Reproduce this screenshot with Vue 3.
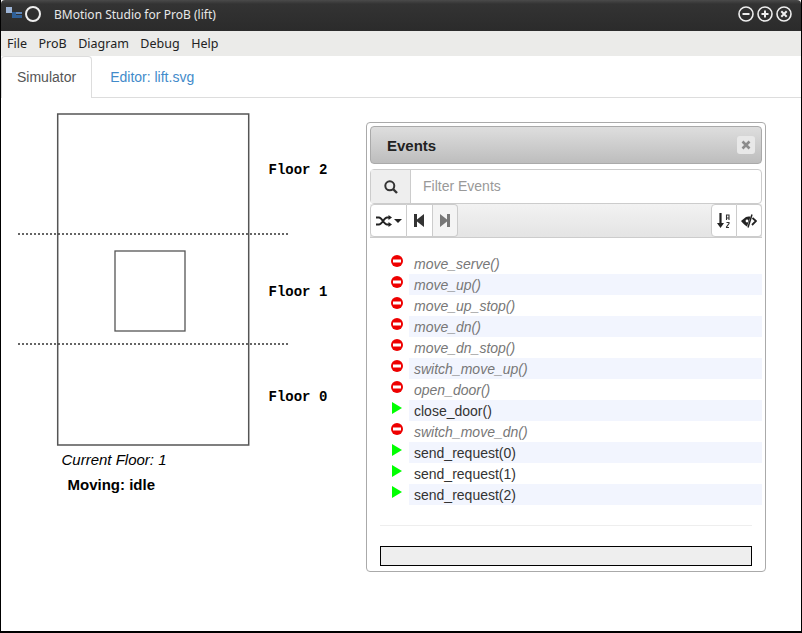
<template>
  <div class="win">
    <header class="titlebar">
      <svg class="app-icon" viewBox="0 0 16 12" width="16" height="12">
        <rect x="0" y="0" width="6" height="6" fill="#9db4d6" />
        <rect x="6" y="5" width="4" height="6" fill="#2f5f96" />
        <rect x="10" y="5" width="6" height="2" fill="#5f86b8" />
        <rect x="10" y="8" width="6" height="3" fill="#2f5f96" />
      </svg>
      <span class="ring"></span>
      <span class="title">BMotion Studio for ProB (lift)</span>
      <div class="win-btns">
        <svg v-for="b in winButtons" :key="b" viewBox="0 0 16 16" width="16" height="16">
          <circle cx="8" cy="8" r="7" fill="none" stroke="#eee" stroke-width="1.6" />
          <path :d="b" stroke="#eee" stroke-width="2" fill="none" />
        </svg>
      </div>
    </header>
    <nav class="menubar">
      <span v-for="m in menus" :key="m">{{ m }}</span>
    </nav>
    <div class="tabs">
      <div class="tab active">Simulator</div>
      <div class="tab">Editor: lift.svg</div>
    </div>
    <main class="content">
      <svg class="lift" width="339" height="400" viewBox="1 1 339 400">
        <rect x="57.700" y="17" width="191" height="331" fill="#fff" stroke="#555" stroke-width="1.500" />
        <rect x="115" y="154" width="70" height="80" fill="#fff" stroke="#555" stroke-width="1.300" />
        <line x1="18" y1="137" x2="288" y2="137" class="dash" />
        <line x1="18" y1="247" x2="288" y2="247" class="dash" />
        <text x="268.500" y="77" class="floor">Floor 2</text>
        <text x="268.500" y="199" class="floor">Floor 1</text>
        <text x="268.500" y="304" class="floor">Floor 0</text>
        <text x="61.500" y="368" class="cur">Current Floor: 1</text>
        <text x="67.500" y="393" class="moving">Moving: idle</text>
      </svg>
      <section class="panel">
        <div class="panel-head">
          <span>Events</span>
          <button class="close">
            <svg viewBox="0 0 10 10" width="10" height="10"><path d="M1.5 1.5l7 7M8.5 1.5l-7 7" stroke="#8c8c8c" stroke-width="2.6" /></svg>
          </button>
        </div>
        <div class="filter">
          <div class="addon">
            <svg viewBox="0 0 14 14" width="14" height="14"><circle cx="5.8" cy="5.8" r="4.5" fill="none" stroke="#333" stroke-width="2" /><path d="M9 9l4 4" stroke="#333" stroke-width="2.400" /></svg>
          </div>
          <div class="filter-input">Filter Events</div>
        </div>
        <div class="toolbar">
          <div class="group">
            <button class="tb wide">
              <svg viewBox="0 0 16 12" width="16" height="12"><path d="M0 2.5h3c3 0 5 7 8 7h2M0 9.500h3c3 0 5-7 8-7h2" fill="none" stroke="#222" stroke-width="2" /><path d="M12.500 0l3.500 2.500-3.500 2.500zM12.500 7l3.500 2.500-3.500 2.500z" fill="#222" /></svg>
              <i class="caret"></i>
            </button>
            <button class="tb">
              <svg viewBox="0 0 10 13" width="10" height="13"><path d="M0 0h3v5.500L10 0v13L3 7.500V13H0z" fill="#333" /></svg>
            </button>
            <button class="tb off">
              <svg viewBox="0 0 10 13" width="10" height="13"><path d="M10 0H7v5.500L0 0v13l7-5.500V13h3z" fill="#777" /></svg>
            </button>
          </div>
          <div class="group">
            <button class="tb">
              <svg viewBox="0 0 13 16" width="13" height="16">
                <path d="M3.500 0v11" stroke="#222" stroke-width="2.200" /><path d="M0 10h7l-3.500 5z" fill="#222" />
                <path d="M9.500 7V2h2.500v5M9.500 5h2.500" fill="none" stroke="#333" stroke-width="1.100" />
                <path d="M9.500 9.500h2.500v1l-2.500 3.500v.5h2.500" fill="none" stroke="#333" stroke-width="1.100" />
              </svg>
            </button>
            <button class="tb">
              <svg viewBox="0 0 16 14" width="16" height="14">
                <path d="M0 7l5-4c1.500-.6 3-.8 4.500-.2L6 12.500C4 11.500 2 9.500 0 7z" fill="#222" />
                <circle cx="6" cy="7" r="1.400" fill="#fff" />
                <path d="M11.500 4l3.500 3-4 4" fill="none" stroke="#222" stroke-width="1.800" />
                <path d="M11 .5L7 13.500" stroke="#222" stroke-width="1.500" />
              </svg>
            </button>
          </div>
        </div>
        <ul class="events">
          <li v-for="e in events" :key="e.name" :class="{ disabled: !e.on }">
            <svg v-if="e.on" class="ic" viewBox="0 0 12 12" width="12" height="12"><path d="M1 0l10 6-10 6z" fill="#0f0" /></svg>
            <svg v-else class="ic" viewBox="0 0 12 12" width="12" height="12"><circle cx="6" cy="6" r="6" fill="#e00" /><rect x="2" y="4.500" width="8" height="3" fill="#fff" /></svg>
            <span class="name">{{ e.name }}</span>
          </li>
        </ul>
        <hr class="rule" />
        <div class="status"></div>
      </section>
    </main>
  </div>
</template>

<script setup>
const menus = ['File', 'ProB', 'Diagram', 'Debug', 'Help']
const winButtons = ['M4.500 8h7', 'M4.500 8h7M8 4.500v7', 'M5.300 5.300l5.400 5.400M10.700 5.300l-5.400 5.400']
const events = [
  { name: 'move_serve()', on: false },
  { name: 'move_up()', on: false },
  { name: 'move_up_stop()', on: false },
  { name: 'move_dn()', on: false },
  { name: 'move_dn_stop()', on: false },
  { name: 'switch_move_up()', on: false },
  { name: 'open_door()', on: false },
  { name: 'close_door()', on: true },
  { name: 'switch_move_dn()', on: false },
  { name: 'send_request(0)', on: true },
  { name: 'send_request(1)', on: true },
  { name: 'send_request(2)', on: true }
]
</script>

<style>
html, body { margin: 0; background: #000; overflow: hidden; }
</style>

<style scoped>
.win {
  width: 802px;
  height: 633px;
  box-sizing: border-box;
  border-left: 1px solid #000;
  border-right: 1px solid #000;
  border-bottom: 2px solid #000;
  background: #fff;
  display: flex;
  flex-direction: column;
  font-family: "Liberation Sans", Arial, sans-serif;
  font-size: 14px;
  color: #333;
  overflow: hidden;
}
.titlebar {
  height: 31px;
  flex: none;
  box-sizing: border-box;
  display: flex;
  align-items: center;
  background: linear-gradient(#4a4a4a, #333 4px, #2b2b2b);
  border-radius: 4px 4px 0 0;
  padding: 0 6px 3px 5px;
  color: #e8e8e8;
  font: 12px "Noto Sans", sans-serif;
}
.app-icon { margin: 0 3px 3px 0; }
.ring {
  width: 12px;
  height: 12px;
  border: 2px solid #eee;
  border-radius: 50%;
}
.title { margin-left: 13px; }
.win-btns { margin-left: auto; display: flex; gap: 3px; margin-right: 3px; }
.menubar {
  height: 25px;
  flex: none;
  background: #ebebe9;
  display: flex;
  align-items: center;
  gap: 11.500px;
  padding-left: 6px;
  font: 12.500px "Noto Sans", sans-serif;
  color: #222;
}
.tabs {
  height: 42px;
  flex: none;
  box-sizing: border-box;
  display: flex;
  border-bottom: 1px solid #ddd;
}
.tab {
  padding: 0 15px;
  margin-left: 2px;
  line-height: 41px;
  color: #428bca;
  border-radius: 4px 4px 0 0;
  border: 1px solid transparent;
  border-bottom: 0;
}
.tab.active {
  margin-left: 0;
  color: #555;
  background: #fff;
  border-color: #ddd;
  box-sizing: border-box;
  height: 42px;
  margin-bottom: -1px;
}
.content { flex: 1; display: flex; align-items: flex-start; }
.lift { flex: none; }
.dash { stroke: #333; stroke-width: 1.5; stroke-dasharray: 2 2; }
.floor { font: bold 14px "Liberation Mono", monospace; fill: #000; }
.cur { font: italic 15px "Liberation Sans", sans-serif; fill: #000; }
.moving { font: bold 15px "Liberation Sans", sans-serif; fill: #000; }
.panel {
  margin: 24px 0 0 26px;
  width: 400px;
  height: 450px;
  box-sizing: border-box;
  border: 1px solid #aaa;
  border-radius: 4px;
  padding: 3px;
  display: flex;
  flex-direction: column;
}
.panel-head {
  height: 38px;
  flex: none;
  box-sizing: border-box;
  border: 1px solid #aaa;
  border-radius: 4px;
  background: linear-gradient(#dedede, #bdbdbd);
  display: flex;
  align-items: center;
  justify-content: space-between;
  padding: 0 6px 0 16px;
  font-weight: bold;
  font-size: 15px;
  color: #222;
}
.close {
  width: 18px;
  height: 18px;
  padding: 0;
  border: 0;
  border-radius: 3px;
  background: #e8e8e8;
  display: flex;
  align-items: center;
  justify-content: center;
}
.filter {
  margin-top: 5px;
  height: 35px;
  flex: none;
  display: flex;
  box-sizing: border-box;
  border: 1px solid #ccc;
  border-radius: 4px;
}
.addon {
  width: 40px;
  box-sizing: border-box;
  background: #eee;
  border-right: 1px solid #ccc;
  display: flex;
  align-items: center;
  justify-content: center;
}
.filter-input { padding-left: 12px; line-height: 32px; color: #999; }
.toolbar {
  height: 34px;
  flex: none;
  box-sizing: border-box;
  display: flex;
  justify-content: space-between;
  background: linear-gradient(#f2f2f2, #e4e4e4);
  border-bottom: 1px solid #ccc;
}
.group { display: flex; }
.tb {
  width: 25.500px;
  padding: 0;
  background: #fff;
  border: 1px solid #ccc;
  border-left-width: 0;
  display: flex;
  align-items: center;
  justify-content: center;
}
.group .tb:first-child { border-left-width: 1px; border-radius: 4px 0 0 4px; }
.group .tb:last-child { border-radius: 0 4px 4px 0; }
.tb.wide { width: 37px; gap: 2px; }
.tb.off { background: #f4f4f4; }
.caret {
  width: 0;
  height: 0;
  border-left: 4px solid transparent;
  border-right: 4px solid transparent;
  border-top: 4px solid #222;
}
.events { list-style: none; margin: 15px 0 0; padding: 0; }
.events li { height: 21px; display: flex; align-items: flex-start; padding-left: 21px; }
.ic { flex: none; margin-top: 2px; }
.name {
  flex: 1;
  height: 21px;
  margin-left: 6px;
  padding-left: 5px;
  line-height: 23px;
  color: #333;
}
.events li:nth-child(even) .name { background: #f2f5fe; }
.events li.disabled .name { color: #777; font-style: italic; }
.rule {
  margin: 20px 10px 0;
  border: 0;
  border-top: 1px solid #eee;
  flex: none;
}
.status {
  margin: 20px 10px 0;
  height: 20px;
  flex: none;
  box-sizing: border-box;
  border: 1px solid #000;
  background: #eee;
}
</style>
